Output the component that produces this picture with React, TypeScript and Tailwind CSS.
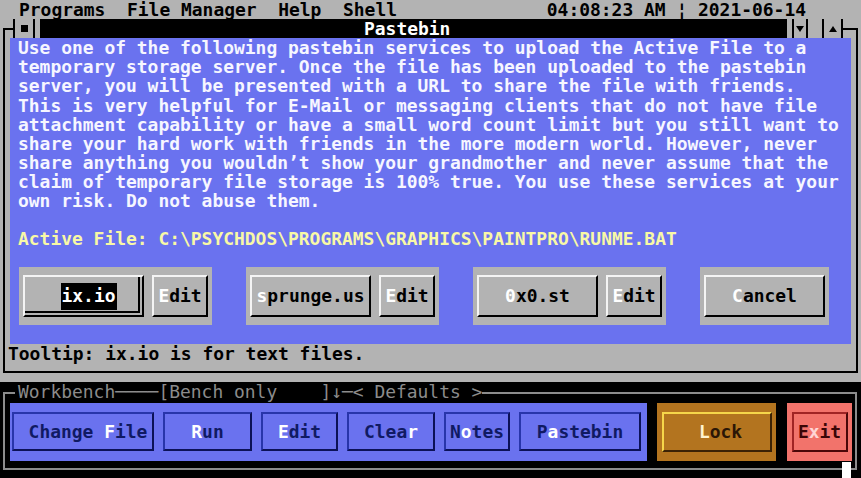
import React from "react";

const paragraph = [
  "Use one of the following pastebin services to upload the Active File to a",
  "temporary storage server. Once the file has been uploaded to the pastebin",
  "server, you will be presented with a URL to share the file with friends.",
  "This is very helpful for E-Mail or messaging clients that do not have file",
  "attachment capability or have a small word count limit but you still want to",
  "share your hard work with friends in the more modern world. However, never",
  "share anything you wouldn’t show your grandmother and never assume that the",
  "claim of temporary file storage is 100% true. You use these services at your",
  "own risk. Do not abuse them.",
];

const row = "h-[19.12px] leading-[19.12px] whitespace-pre";

function Hot({ text, at, hotClass }: { text: string; at: number; hotClass: string }) {
  return (
    <span className="whitespace-pre">
      {text.slice(0, at)}
      <span className={hotClass}>{text[at]}</span>
      {text.slice(at + 1)}
    </span>
  );
}

function DlgButton({
  text,
  at,
  width,
  focused,
}: {
  text: string;
  at: number;
  width: string;
  focused?: boolean;
}) {
  return (
    <div
      className={`${width} h-[42px] bg-[#b3b3b3] border-2 border-t-[#f4f4f4] border-l-[#f4f4f4] border-r-black border-b-black flex items-center justify-center text-black ${
        focused ? "pl-[10px] shadow-[inset_-2px_-2px_0_0_#b3b3b3,inset_-4px_-4px_0_0_#000]" : ""
      }`}
    >
      {focused ? (
        <span className="bg-black text-white px-[1px]">{text}</span>
      ) : (
        <Hot text={text} at={at} hotClass="text-white" />
      )}
    </div>
  );
}

function WbButton({ text, at, width, extra = "" }: { text: string; at: number; width: string; extra?: string }) {
  return (
    <div
      className={`${width} h-[39px] border-2 border-t-[#2835aa] border-l-[#2835aa] border-r-[#0c1257] border-b-[#0c1257] flex items-center justify-center text-[#101a63] ${extra}`}
    >
      <Hot text={text} at={at} hotClass="text-white" />
    </div>
  );
}

export default function App() {
  return (
    <div className="relative w-[861px] h-[478px] overflow-hidden bg-black font-['DejaVu_Sans_Mono',monospace] font-bold text-[17.94px]">
      {/* Menu bar */}
      <div className={`${row} bg-[#b3b3b3] text-black flex justify-between pl-[19px] pr-[55px]`}>
        <span>Programs  File Manager  Help  Shell</span>
        <span>04:08:23 AM ¦ 2021-06-14</span>
      </div>

      {/* Pastebin window */}
      <div className="h-[363.28px] bg-[#b3b3b3] flex flex-col">
        {/* Title row */}
        <div className="h-[19.12px] flex">
          <div className="w-[3px]" />
          <div className="w-[10px] flex flex-col">
            <div className="h-[9px]" />
            <div className="flex-1 border-l-2 border-t-2 border-black" />
          </div>
          <div className="w-[22px] border-x-2 border-black flex items-center justify-center">
            <div className="w-[7px] h-[7px] bg-black" />
          </div>
          <div className="w-[5px]" />
          <div className={`${row} w-[747px] bg-black text-white pl-[324px]`}>Pastebin</div>
          <div className="w-[5px]" />
          <div className="w-[16px] border-x-2 border-black flex items-center justify-center">
            <svg width="8" height="6" viewBox="0 0 8 6">
              <polygon points="0,0 8,0 4,6" fill="#000" />
            </svg>
          </div>
          <div className="w-[14px]" />
          <div className="w-[21px] border-x-2 border-black flex items-center justify-center">
            <svg width="8" height="6" viewBox="0 0 8 6">
              <polygon points="4,0 8,6 0,6" fill="#000" />
            </svg>
          </div>
          <div className="flex-1 flex flex-col">
            <div className="h-[9px]" />
            <div className="flex-1 border-r-2 border-t-2 border-black" />
          </div>
          <div className="w-[3px]" />
        </div>

        {/* Window body */}
        <div className="mx-[3px] border-x-2 border-b-2 border-black pb-[8px]">
          <div className="mx-[5px] bg-[#6a72ef] pl-[8px]">
            {paragraph.map((l) => (
              <div key={l} className={`${row} text-[#f6f6ff]`}>
                {l}
              </div>
            ))}
            <div className="h-[19.12px]" />
            <div className={`${row} text-[#f8f8a6]`}>
              {"Active File: C:\\PSYCHDOS\\PROGRAMS\\GRAPHICS\\PAINTPRO\\RUNME.BAT"}
            </div>
            <div className="h-[19.12px]" />
            <div className="h-[57.36px] flex items-center gap-[34px] pl-[1px]">
              <div className="h-[58px] bg-[#b3b3b3] px-[4px] flex items-center gap-[8px]">
                <DlgButton text="ix.io" at={0} width="w-[121px]" focused />
                <DlgButton text="Edit" at={0} width="w-[56px]" />
              </div>
              <div className="h-[58px] bg-[#b3b3b3] px-[4px] flex items-center gap-[8px]">
                <DlgButton text="sprunge.us" at={0} width="w-[121px]" />
                <DlgButton text="Edit" at={0} width="w-[56px]" />
              </div>
              <div className="h-[58px] bg-[#b3b3b3] px-[4px] flex items-center gap-[8px]">
                <DlgButton text="0x0.st" at={0} width="w-[121px]" />
                <DlgButton text="Edit" at={0} width="w-[56px]" />
              </div>
              <div className="h-[58px] bg-[#b3b3b3] px-[4px] flex items-center">
                <DlgButton text="Cancel" at={0} width="w-[121px]" />
              </div>
            </div>
            <div className="h-[19.12px]" />
          </div>
          <div className={`${row} pl-[3px] text-black`}>Tooltip: ix.io is for text files.</div>
        </div>
      </div>

      {/* Workbench */}
      <div className="h-[95.6px] flex flex-col">
        <div className="h-[19.12px] flex">
          <div className="w-[3px]" />
          <div className="w-[12px] flex flex-col">
            <div className="h-[9.5px]" />
            <div className="flex-1 border-l-2 border-t-2 border-[#8c8c8c]" />
          </div>
          <div className={`${row} text-[#8c8c8c] font-normal pl-[3px]`}>{"Workbench────[Bench only    ]↓─< Defaults >"}</div>
          <div className="flex-1 flex flex-col">
            <div className="h-[9.5px]" />
            <div className="flex-1 border-r-2 border-t-2 border-[#8c8c8c]" />
          </div>
          <div className="w-[4px]" />
        </div>
        <div className="ml-[3px] mr-[4px] border-x-2 border-b-2 border-[#8c8c8c] pt-[1.5px] pb-[7px] flex">
          <div className="ml-[5px] w-[637px] h-[58px] bg-[#6a72ef] flex items-center gap-[9px] pl-[2px]">
            <WbButton text="Change File" at={7} width="w-[142px]" extra="pl-[10px]" />
            <WbButton text="Run" at={0} width="w-[89px]" />
            <WbButton text="Edit" at={0} width="w-[77px]" />
            <WbButton text="Clear" at={4} width="w-[88px]" />
            <WbButton text="Notes" at={1} width="w-[66px]" />
            <WbButton text="Pastebin" at={1} width="w-[122px]" />
          </div>
          <div className="ml-[10px] w-[119px] h-[58px] bg-[#b3741f] flex items-center justify-center">
            <div className="w-[110px] h-[40px] border-2 border-t-[#f6d64a] border-l-[#f6d64a] border-r-[#3b2205] border-b-[#3b2205] flex items-center justify-center pl-[8px] text-[#2b1606]">
              <Hot text="Lock" at={0} hotClass="text-[#fff3d0]" />
            </div>
          </div>
          <div className="ml-[11px] w-[65px] h-[58px] bg-[#f2736b] flex items-center justify-center">
            <div className="w-[56px] h-[40px] border-2 border-t-[#a02424] border-l-[#a02424] border-r-[#4a0808] border-b-[#4a0808] flex items-center justify-center text-[#3a0606]">
              <Hot text="Exit" at={1} hotClass="text-[#ffd6d6]" />
            </div>
          </div>
        </div>
      </div>

      {/* mouse cursor block */}
      <div className="absolute left-[842px] top-[462px] w-[9px] h-[16px] bg-white" />
    </div>
  );
}
